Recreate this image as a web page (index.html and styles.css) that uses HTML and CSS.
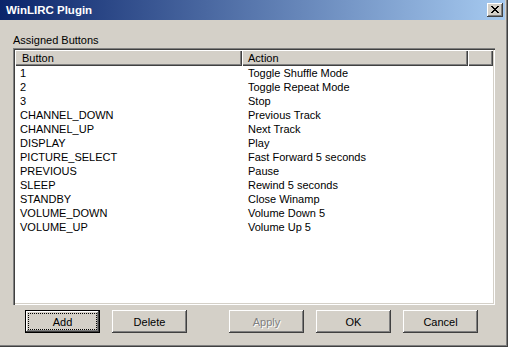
FILE: index.html
```html
<!DOCTYPE html>
<html lang="en">

<head>
    <meta charset="UTF-8">
    <meta name="viewport" content="width=device-width, initial-scale=1.0">
    <title>WinLIRC Plugin</title>
    <link rel="stylesheet" href="styles.css">
</head>

<body>
    <div class="dialog">
        <div class="titlebar">
            <span class="title">WinLIRC Plugin</span>
            <button class="close" type="button">
                <svg width="8" height="7" viewBox="0 0 8 7">
                    <path d="M0 0h2v1H0z M6 0h2v1H6z M1 1h2v1H1z M5 1h2v1H5z M2 2h4v1H2z M3 3h2v1H3z M2 4h4v1H2z M1 5h2v1H1z M5 5h2v1H5z M0 6h2v1H0z M6 6h2v1H6z" fill="#000" />
                </svg>
            </button>
        </div>

        <div class="content">
            <div class="group-label">Assigned Buttons</div>

            <div class="listview">
                <div class="lv-header">
                    <div class="hd hd-button">Button</div>
                    <div class="hd hd-action">Action</div>
                    <div class="hd hd-rest"></div>
                </div>
                <div class="lv-rows">
                    <div class="row"><span>1</span><span>Toggle Shuffle Mode</span></div>
                    <div class="row"><span>2</span><span>Toggle Repeat Mode</span></div>
                    <div class="row"><span>3</span><span>Stop</span></div>
                    <div class="row"><span>CHANNEL_DOWN</span><span>Previous Track</span></div>
                    <div class="row"><span>CHANNEL_UP</span><span>Next Track</span></div>
                    <div class="row"><span>DISPLAY</span><span>Play</span></div>
                    <div class="row"><span>PICTURE_SELECT</span><span>Fast Forward 5 seconds</span></div>
                    <div class="row"><span>PREVIOUS</span><span>Pause</span></div>
                    <div class="row"><span>SLEEP</span><span>Rewind 5 seconds</span></div>
                    <div class="row"><span>STANDBY</span><span>Close Winamp</span></div>
                    <div class="row"><span>VOLUME_DOWN</span><span>Volume Down 5</span></div>
                    <div class="row"><span>VOLUME_UP</span><span>Volume Up 5</span></div>
                </div>
            </div>

            <div class="buttons">
                <button class="btn default" type="button"><span class="focus">Add</span></button>
                <button class="btn" type="button">Delete</button>
                <button class="btn apply" type="button" disabled>Apply</button>
                <button class="btn" type="button">OK</button>
                <button class="btn" type="button">Cancel</button>
            </div>
        </div>
    </div>
</body>

</html>
```

FILE: styles.css
```css
* {
    margin: 0;
    padding: 0;
    box-sizing: border-box;
}

body {
    font-family: "Liberation Sans", Arial, sans-serif;
    font-size: 11px;
    color: #000;
    background: #d4d0c8;
}

.dialog {
    width: 508px;
    height: 347px;
    background: #d4d0c8;
    box-shadow: inset -1px -1px #404040, inset -2px -2px #808080;
    display: flex;
    flex-direction: column;
}

/* title bar */
.titlebar {
    width: 505px;
    height: 20px;
    background: linear-gradient(to right, #0a246a, #a6caf0);
    display: flex;
    align-items: center;
    justify-content: space-between;
    padding: 0 2px 0 6px;
}

.title {
    color: #fff;
    font-weight: bold;
    font-size: 11.5px;
}

.close {
    width: 16px;
    height: 14px;
    background: #d4d0c8;
    border: none;
    box-shadow: inset -1px -1px #404040, inset 1px 1px #fff, inset -2px -2px #808080;
    display: flex;
    align-items: center;
    justify-content: center;
    padding: 0 0 1px 0;
}

.close svg {
    display: block;
}

/* content */
.content {
    padding: 14px 0 0 13px;
}

.group-label {
    line-height: 13px;
    margin-bottom: 1px;
}

.listview {
    width: 482px;
    height: 257px;
    background: #fff;
    padding: 2px;
    box-shadow: inset 1px 1px #808080, inset 2px 2px #404040, inset -1px -1px #fff, inset -2px -2px #d4d0c8;
}

.lv-header {
    display: flex;
    height: 16px;
}

.hd {
    background: #d4d0c8;
    line-height: 16px;
    box-shadow: inset 1px 1px #fff, inset -1px -1px #404040, inset -2px -2px #808080;
}

.hd-button {
    width: 227px;
    padding-left: 7px;
}

.hd-action {
    width: 226px;
    padding-left: 6px;
}

.hd-rest {
    width: 25px;
}

.row {
    display: flex;
    height: 14px;
    line-height: 14px;
}

.row span:first-child {
    width: 227px;
    padding-left: 5px;
}

.row span:last-child {
    padding-left: 6px;
}

/* bottom buttons */
.buttons {
    display: flex;
    gap: 12px;
    margin-top: 5px;
    padding-left: 12px;
}

.btn {
    width: 75px;
    height: 23px;
    background: #d4d0c8;
    border: none;
    font-family: "Liberation Sans", Arial, sans-serif;
    font-size: 11px;
    color: #000;
    box-shadow: inset -1px -1px #404040, inset 1px 1px #fff, inset -2px -2px #808080;
}

.btn.default {
    box-shadow: inset 0 0 0 1px #000, inset -2px -2px #404040, inset 2px 2px #fff, inset -3px -3px #808080;
    display: flex;
    padding: 4px;
}

.focus {
    flex: 1;
    outline: 1px dotted #000;
    display: flex;
    align-items: center;
    justify-content: center;
}

.btn.apply {
    margin-left: 30px;
    color: #808080;
    text-shadow: 1px 1px #fff;
}
```
